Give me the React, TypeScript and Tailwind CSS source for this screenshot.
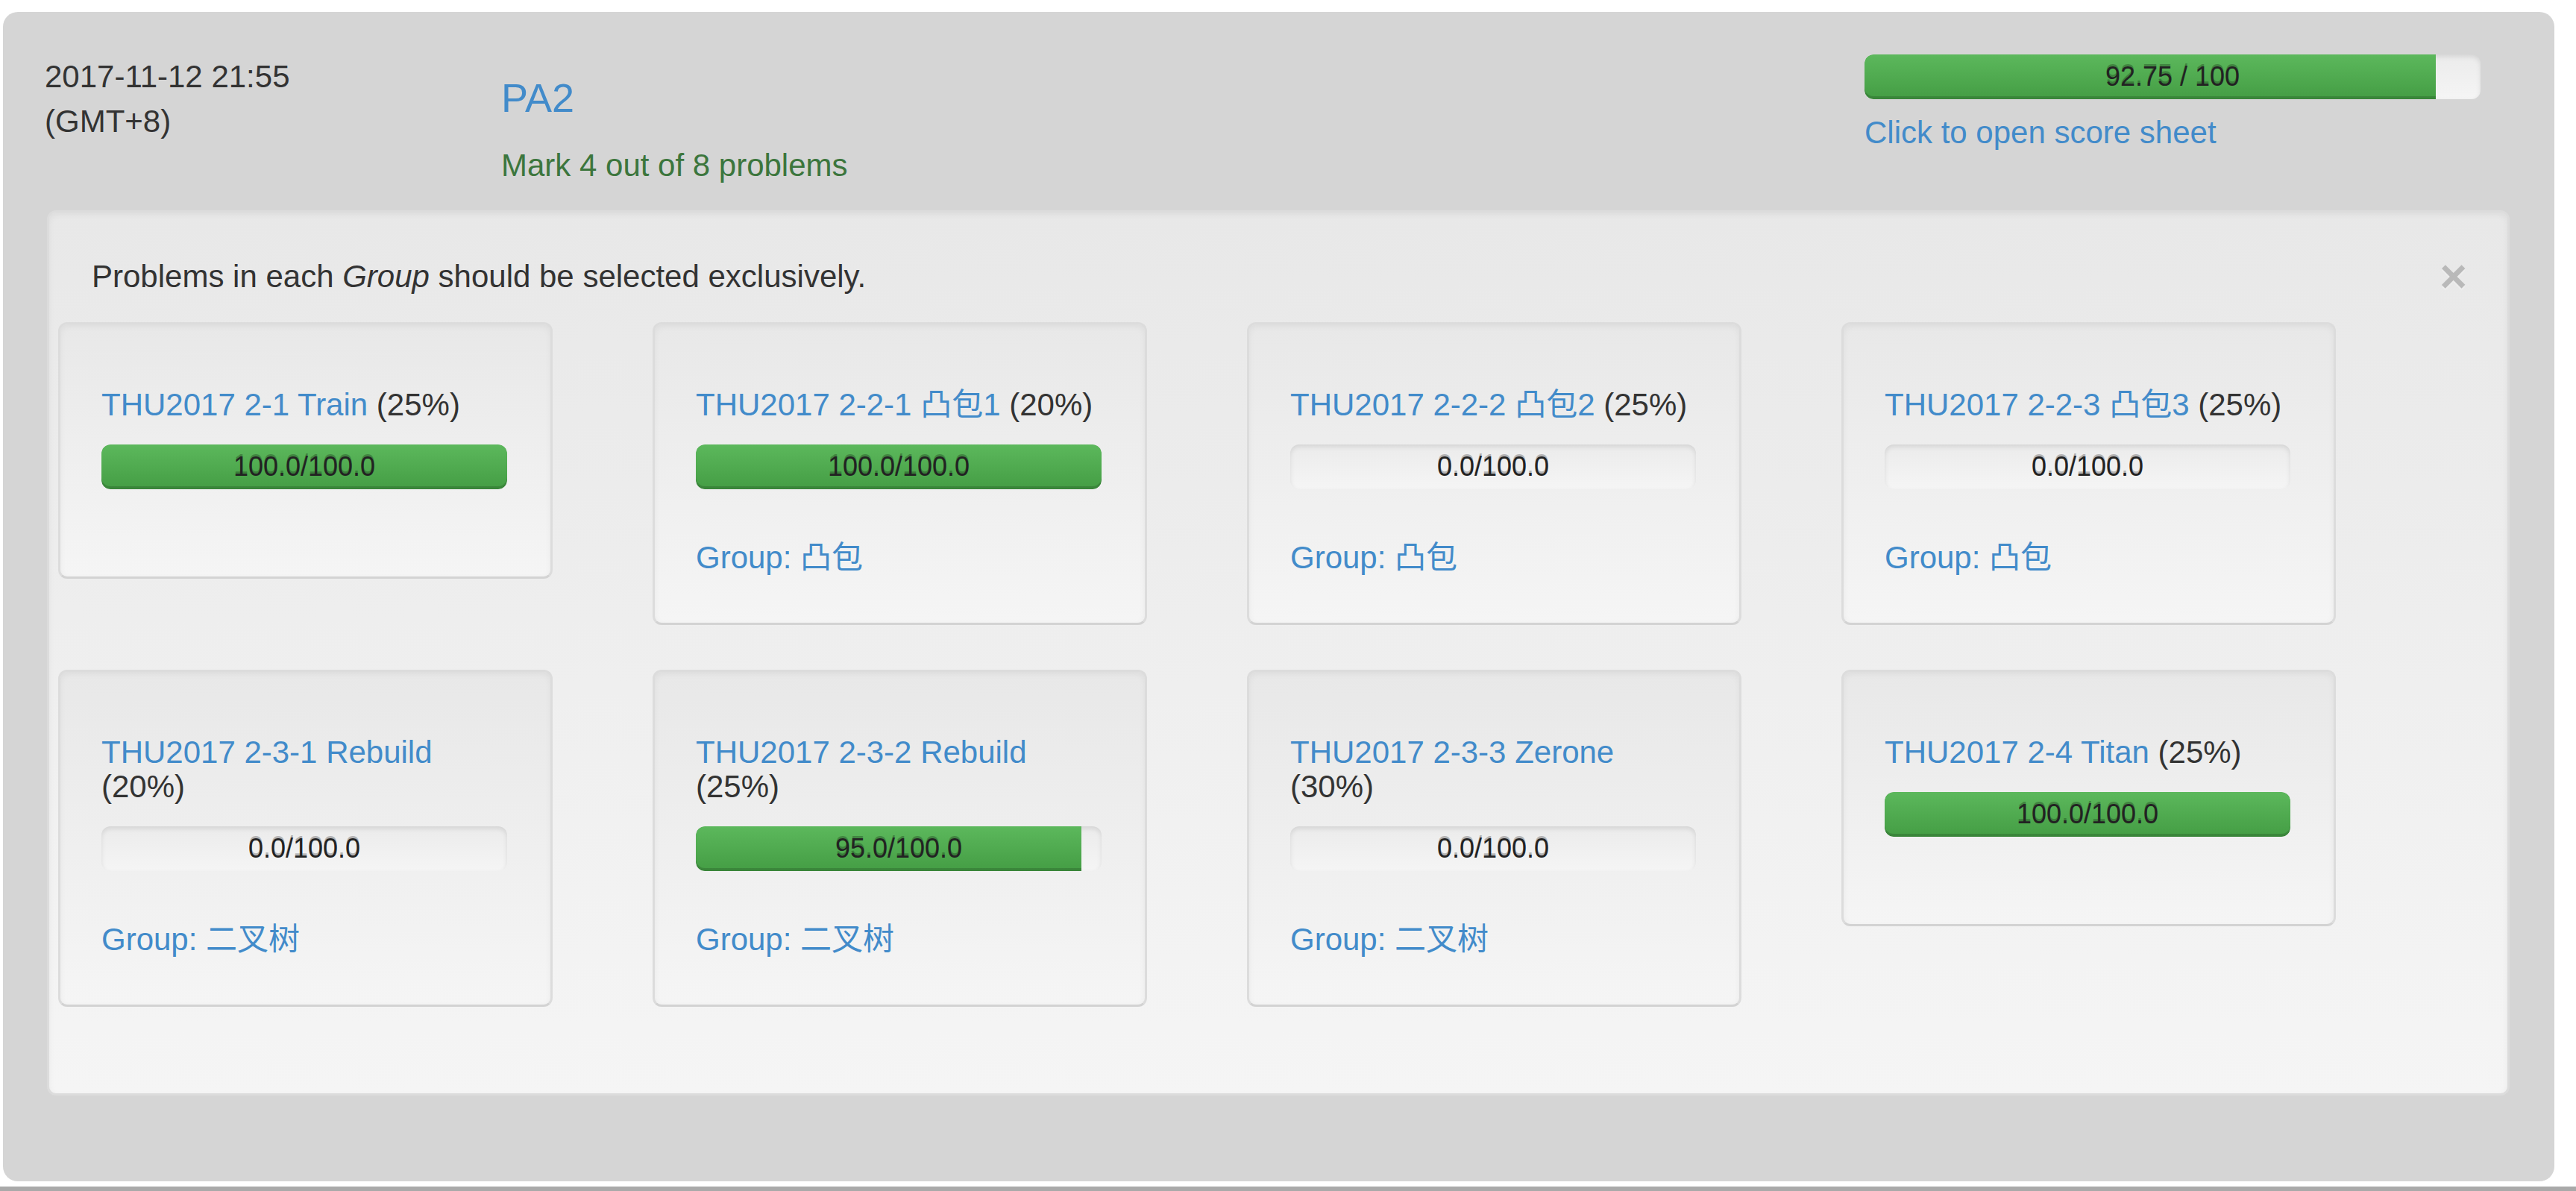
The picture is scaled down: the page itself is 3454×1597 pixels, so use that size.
const font = { fontFamily: '"Liberation Sans", Arial, "Noto Sans CJK SC", sans-serif' }

type Problem = {
  name: string
  weight: string
  score: number
  group?: string
}

const problems: Problem[] = [
  { name: 'THU2017 2-1 Train', weight: '(25%)', score: 100 },
  { name: 'THU2017 2-2-1 凸包1', weight: '(20%)', score: 100, group: '凸包' },
  { name: 'THU2017 2-2-2 凸包2', weight: '(25%)', score: 0, group: '凸包' },
  { name: 'THU2017 2-2-3 凸包3', weight: '(25%)', score: 0, group: '凸包' },
  { name: 'THU2017 2-3-1 Rebuild', weight: '(20%)', score: 0, group: '二叉树' },
  { name: 'THU2017 2-3-2 Rebuild', weight: '(25%)', score: 95, group: '二叉树' },
  { name: 'THU2017 2-3-3 Zerone', weight: '(30%)', score: 0, group: '二叉树' },
  { name: 'THU2017 2-4 Titan', weight: '(25%)', score: 100 },
]

const ScoreBar = ({ percent, label }: { percent: number; label: string }) => (
  <div className="relative h-[60px] w-full overflow-hidden rounded-[12px] bg-[linear-gradient(to_bottom,#ebebeb_0%,#f5f5f5_100%)] shadow-[inset_0_3px_6px_rgba(0,0,0,0.1)]">
    <div
      className="h-full rounded-l-[12px] bg-[linear-gradient(to_bottom,#5cb85c_0%,#449d44_100%)] shadow-[inset_0_-4px_0_rgba(0,0,0,0.15)]"
      style={{ width: `${percent}%`, borderTopRightRadius: percent >= 100 ? 12 : 0, borderBottomRightRadius: percent >= 100 ? 12 : 0 }}
    />
    <div className="absolute inset-0 flex items-center justify-center text-[36px] text-[#222] [text-shadow:0_-3px_0_rgba(0,0,0,0.25)]">
      {label}
    </div>
  </div>
)

const ProblemCard = ({ p }: { p: Problem }) => (
  <div className="w-[797px]">
    <div className="mb-[60px] w-[663px] rounded-[12px] border-[3px] border-[#dcdcdc] border-b-[#d3d3d3] bg-[linear-gradient(to_bottom,#e8e8e8_0%,#f5f5f5_100%)] pt-[54px] pr-[58px] pb-[57px] pl-[55px] shadow-[inset_0_3px_9px_rgba(0,0,0,0.05)]">
      <h5 className="mt-[31px] mb-[30px] text-[42px] leading-[46px] text-[#333]">
        <a className="text-[#428bca]">{p.name}</a> {p.weight}
      </h5>
      <div className="mb-[60px]">
        <ScoreBar percent={p.score} label={`${p.score.toFixed(1)}/100.0`} />
      </div>
      {p.group && <div className="pt-[2px] text-[42px] leading-[60px] text-[#428bca]">Group: {p.group}</div>}
    </div>
  </div>
)

export default function App() {
  return (
    <div className="h-[1597px] w-[3454px] overflow-hidden bg-white pt-[16px]" style={font}>
      <div className="ml-[4px] h-[1568px] w-[3421px] rounded-[20px] bg-[#d5d5d5]">
        <div className="flex h-[266px] pl-[56px] text-[42px] leading-[60px]">
          <div className="w-[612px] pt-[57px] text-[#333]">
            <div>2017-11-12 21:55</div>
            <div>(GMT+8)</div>
          </div>
          <div className="w-[1828px] pt-[86px]">
            <h4 className="text-[54px] leading-[59px] text-[#428bca]">PA2</h4>
            <div className="mt-[31px] text-[#3c763d]">Mark 4 out of 8 problems</div>
          </div>
          <div className="w-[826px] pt-[57px]">
            <ScoreBar percent={92.75} label="92.75 / 100" />
            <div className="mt-[15px] text-[#428bca]">Click to open score sheet</div>
          </div>
        </div>
        <div className="relative ml-[59px] w-[3302px] rounded-[12px] border-[3px] border-[#dcdcdc] bg-[linear-gradient(to_bottom,#e8e8e8_0%,#f5f5f5_100%)] px-[57px] pt-[56px] pb-[56px] shadow-[inset_0_3px_9px_rgba(0,0,0,0.05)]">
          <div className="absolute top-[54px] right-[54px] text-[63px] leading-none font-bold text-black opacity-20 [text-shadow:0_3px_0_#fff]">
            ×
          </div>
          <p className="mb-[31px] text-[42px] leading-[60px] text-[#333]">
            Problems in each <i>Group</i> should be selected exclusively.
          </p>
          <div className="-mx-[45px] flex flex-wrap items-start">
            {problems.map((p) => (
              <ProblemCard key={p.name} p={p} />
            ))}
          </div>
        </div>
      </div>
      <div className="mt-[7px] h-[10px] w-full bg-[#a9a9a9]" />
    </div>
  )
}
